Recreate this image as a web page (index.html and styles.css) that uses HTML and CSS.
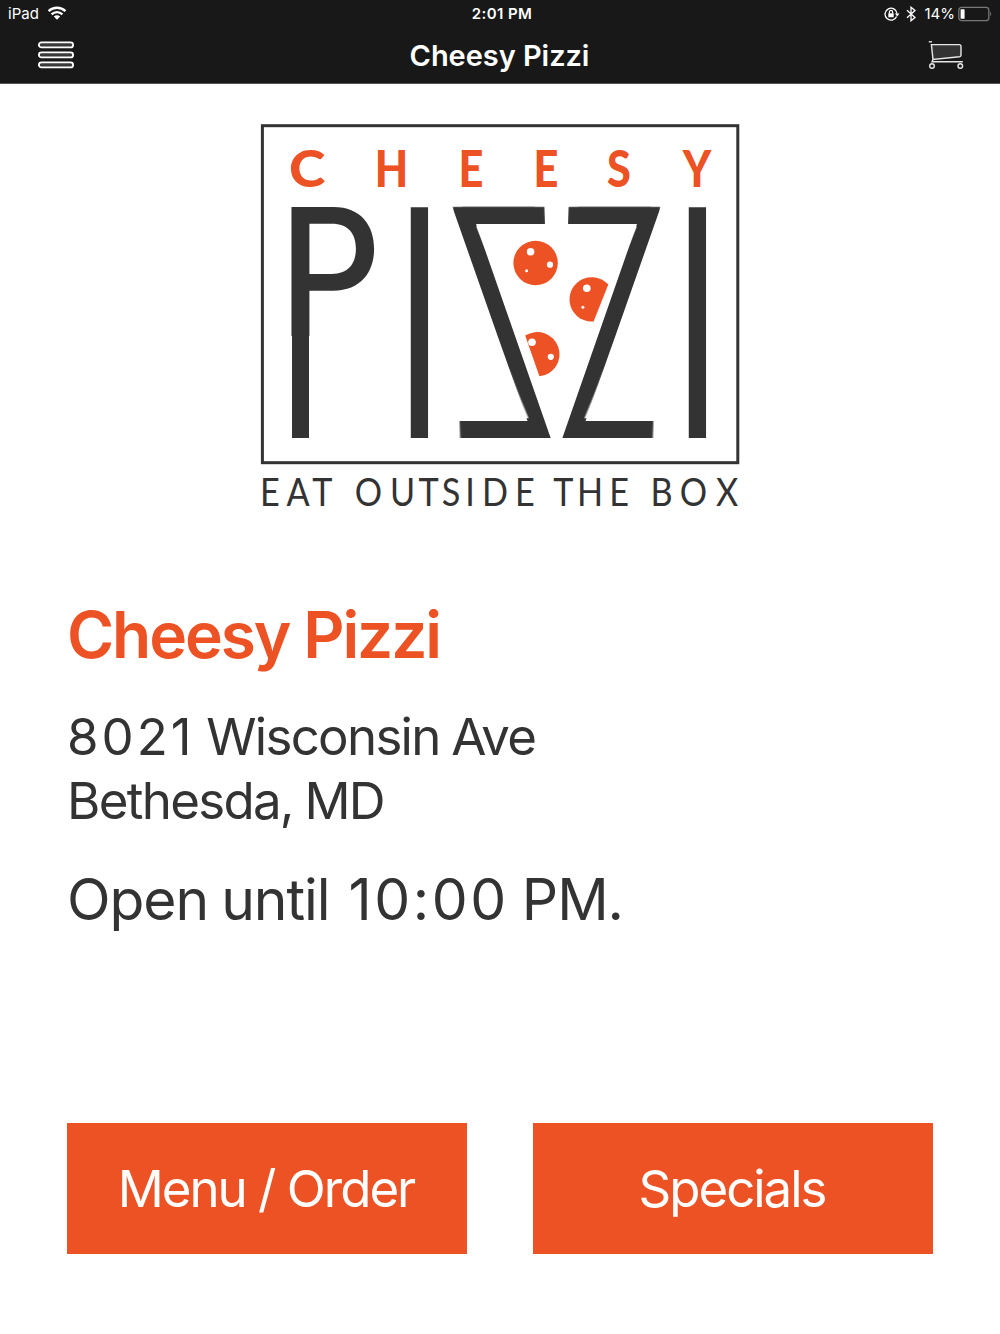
FILE: index.html
```html
<!DOCTYPE html>
<html lang="en">
  <head>
    <meta charset="UTF-8" />
    <meta name="viewport" content="width=device-width, initial-scale=1.0" />
    <title>Cheesy Pizzi</title>
    <link rel="stylesheet" href="styles.css">
  </head>

  <body>
    <header class="header">
      <div class="status-bar">
        <div class="status-left">
          <span class="device">iPad</span>
          <svg class="wifi" width="20" height="15" viewBox="0 0 20 15">
            <path d="M1.6 5.2a12 12 0 0 1 16.8 0" />
            <path d="M4.6 8.3a7.8 7.8 0 0 1 10.8 0" />
            <path class="wifi-dot" d="M6.8 10.6a4.6 4.6 0 0 1 6.4 0L10 13.8z" />
          </svg>
        </div>
        <span class="time">2:01 PM</span>
        <div class="status-right">
          <svg class="lock" width="16" height="14" viewBox="0 0 16 14">
            <path d="M12.6 9.4A6 6 0 1 1 13 6.6" />
            <path class="solid" d="M10.9 6.4h4.6l-2.3 3z" />
            <rect class="solid" x="4.3" y="6.2" width="5.4" height="4" rx="0.5" />
            <path d="M5.4 6.4V5a1.6 1.6 0 0 1 3.2 0v1.4" />
          </svg>
          <svg class="bluetooth" width="10" height="16" viewBox="0 0 10 16">
            <path d="M1 4.3l8 7.2-4 3.3V1.2l4 3.3-8 7.2" />
          </svg>
          <span class="percent">14%</span>
          <svg class="battery" width="34" height="16" viewBox="0 0 34 16">
            <rect class="battery-case" x="0.8" y="1.3" width="30" height="13.4" rx="2.8" />
            <rect class="battery-level" x="2.6" y="3.2" width="4" height="9.6" rx="0.6" />
            <path class="battery-tip" d="M32.2 5.4q2 2.6 0 5.2z" />
          </svg>
        </div>
      </div>
      <nav class="nav-bar">
        <svg class="menu-icon" width="36" height="28" viewBox="0 0 36 28">
          <rect x="0.9" y="1.4" width="34.2" height="5" rx="2.5" />
          <rect x="0.9" y="11.4" width="34.2" height="5" rx="2.5" />
          <rect x="0.9" y="21.4" width="34.2" height="5" rx="2.5" />
        </svg>
        <h1 class="nav-title">Cheesy Pizzi</h1>
        <svg class="cart-icon" width="36" height="30" viewBox="0 0 36 30">
          <path class="basket" d="M3.4 4.6h27.8q1.8 0 1.8 1.8v8.8q0 1.3-1.6 1.5L5 19.4z" />
          <path d="M0.8 1.8h3.2" />
          <path d="M5 19.4L4 21.8h30.8" />
          <circle cx="4" cy="26" r="2.3" />
          <circle cx="32.3" cy="26" r="2.3" />
        </svg>
      </nav>
    </header>

    <main class="content">
      <svg class="logo" width="480" height="390" viewBox="260 122 480 390">
        <rect class="frame" x="262.4" y="125.7" width="475.4" height="337" />
        <g class="brand-top">
          <text transform="scale(1.08 1)" y="187" x="284.3">C</text>
          <text transform="scale(0.85 1)" y="187" x="460.6 554.1 642.4 728.2 820">HEESY</text>
        </g>

        <g class="brand-main">
          <text class="pee" transform="translate(278.6 335.7) scale(0.91 1)" font-size="177">P</text>
          <rect x="292" y="270" width="17" height="168" />
          <text transform="translate(394.4 438) scale(0.96 1.635)" font-size="194">I</text>
          <g transform="translate(1113 0) scale(-1 1)">
            <text class="zed" transform="translate(549.5 438) skewX(-2) scale(0.53 1)" font-size="317.5">Z</text>
            <path class="trim" d="M661 206h5v215h-80.5zM562 439h-5v-215h80z" />
          </g>
          <g>
            <text class="zed" transform="translate(549.5 438) skewX(-2) scale(0.53 1)" font-size="317.5">Z</text>
            <path class="trim" d="M661 206h5v215h-80.5zM562 439h-5v-215h80z" />
          </g>
          <text transform="translate(672.4 438) scale(0.96 1.635)" font-size="194">I</text>
        </g>

        <g class="toppings">
          <circle cx="535.6" cy="263" r="22.2" />
          <path d="M608.3 284.6A22.2 22.2 0 1 0 593.6 321.5z" />
          <path d="M525.2 335.6A22.2 22.2 0 1 1 539.4 376.3z" />
        </g>
        <g class="holes">
          <circle cx="530.6" cy="251.8" r="3.8" />
          <circle cx="550" cy="264.7" r="3.1" />
          <circle cx="526.6" cy="270.8" r="1.5" />
          <circle cx="586.8" cy="288.2" r="3.8" />
          <circle cx="582.9" cy="307.2" r="1.5" />
          <circle cx="532" cy="342.3" r="3.8" />
          <circle cx="550.8" cy="356.8" r="3.1" />
        </g>

        <text class="tagline" transform="scale(0.9 1)" y="506" x="300 331.1 358.3 385 409.4 447.2 476.3 501.1 522.2 550 583.3 605 625.9 655.6 687.8 710 735 770.6 807.8">EAT OUTSIDE THE BOX</text>
      </svg>

      <section class="info">
        <h2 class="name">Cheesy Pizzi</h2>
        <p class="address"><span class="street-no">8021</span> Wisconsin Ave<br>Bethesda, MD</p>
        <p class="hours">Open until <span class="closing">10:00</span> PM.</p>
      </section>

      <div class="actions">
        <button class="btn">Menu / Order</button>
        <button class="btn">Specials</button>
      </div>
    </main>
  </body>
</html>
```

FILE: styles.css
```css
* {
  box-sizing: border-box;
}

body {
  display: flex;
  flex-direction: column;
  height: 1334px;
  margin: 0;
  background-color: #fff;
  color: #333;
  font-family: Inter, "Liberation Sans", sans-serif;
}

h1,
h2,
p {
  margin: 0;
}

svg {
  display: block;
  fill: none;
}

.header {
  height: 84px;
  background-color: #181818;
  border-bottom: 1px solid #555;
  color: #fff;
}

.status-bar {
  display: grid;
  grid-template-columns: 1fr auto 1fr;
  align-items: center;
  height: 27px;
  padding: 0 8px;
  font-size: 15px;
}

.status-left,
.status-right {
  display: flex;
  align-items: center;
}

.status-right {
  justify-content: flex-end;
}

.wifi {
  margin-left: 8px;
  stroke: #fff;
  stroke-width: 2.4;
}

.wifi-dot {
  fill: #fff;
  stroke: none;
}

.time {
  padding-left: 4px;
  font-weight: 600;
  letter-spacing: 0.4px;
}

.lock {
  margin-right: 6px;
  stroke: #fff;
  stroke-width: 1.3;
}

.solid {
  fill: #fff;
  stroke: none;
}

.bluetooth {
  margin-right: 8px;
  stroke: #fff;
  stroke-width: 1.3;
}

.battery {
  margin-left: 3px;
}

.battery-case {
  stroke: #777;
  stroke-width: 1.3;
}

.battery-level {
  fill: #fff;
}

.battery-tip {
  fill: #777;
}

.nav-bar {
  display: flex;
  justify-content: space-between;
  align-items: center;
  height: 56px;
  padding: 0 36px 0 38px;
}

.nav-title {
  padding-right: 3px;
  font-size: 29px;
  font-weight: 600;
  letter-spacing: -0.05px;
}

.menu-icon {
  fill: #3a3a3a;
  stroke: #fff;
  stroke-width: 1.8;
}

.cart-icon {
  stroke: #e6e6e6;
  stroke-width: 1.4;
}

.basket {
  fill: #333;
}

.content {
  display: flex;
  flex-direction: column;
  padding: 38px 67px 0;
}

.logo {
  align-self: center;
}

.frame {
  stroke: #333;
  stroke-width: 3;
}

.brand-top {
  fill: #ed5224;
  font-family: Lato, sans-serif;
  font-size: 51px;
  font-weight: 900;
  text-anchor: middle;
}

.brand-main {
  fill: #333;
  font-family: Inter, sans-serif;
}

.pee {
  font-weight: 480;
}

/* the shadow thickens the diagonal only */
.zed {
  font-weight: 280;
  filter: drop-shadow(18px 0 0 #333);
}

.trim,
.holes {
  fill: #fff;
}

.toppings {
  fill: #ed5224;
}

.tagline {
  fill: #333;
  font-family: Lato, sans-serif;
  font-size: 38px;
  text-anchor: middle;
}

.info {
  height: 611px;
  padding-top: 84px;
}

.name {
  color: #ed5224;
  font-size: 64px;
  font-weight: 600;
  line-height: 78px;
  letter-spacing: -2.1px;
}

.address {
  margin-top: 31px;
  font-size: 51px;
  line-height: 63.5px;
  letter-spacing: -1.7px;
  word-spacing: -1px;
}

.street-no {
  letter-spacing: 3px;
}

.hours {
  margin-top: 33px;
  font-size: 57px;
  line-height: 70px;
  letter-spacing: -1.1px;
  word-spacing: -1.7px;
}

.closing {
  margin-left: 6px;
  letter-spacing: 2.5px;
}

.actions {
  display: grid;
  grid-template-columns: 1fr 1fr;
  gap: 66px;
}

.btn {
  height: 131px;
  padding: 0 2px 0 0;
  border: none;
  background-color: #ed5224;
  color: #fff;
  font-family: inherit;
  font-size: 51px;
  letter-spacing: -2px;
}
```
